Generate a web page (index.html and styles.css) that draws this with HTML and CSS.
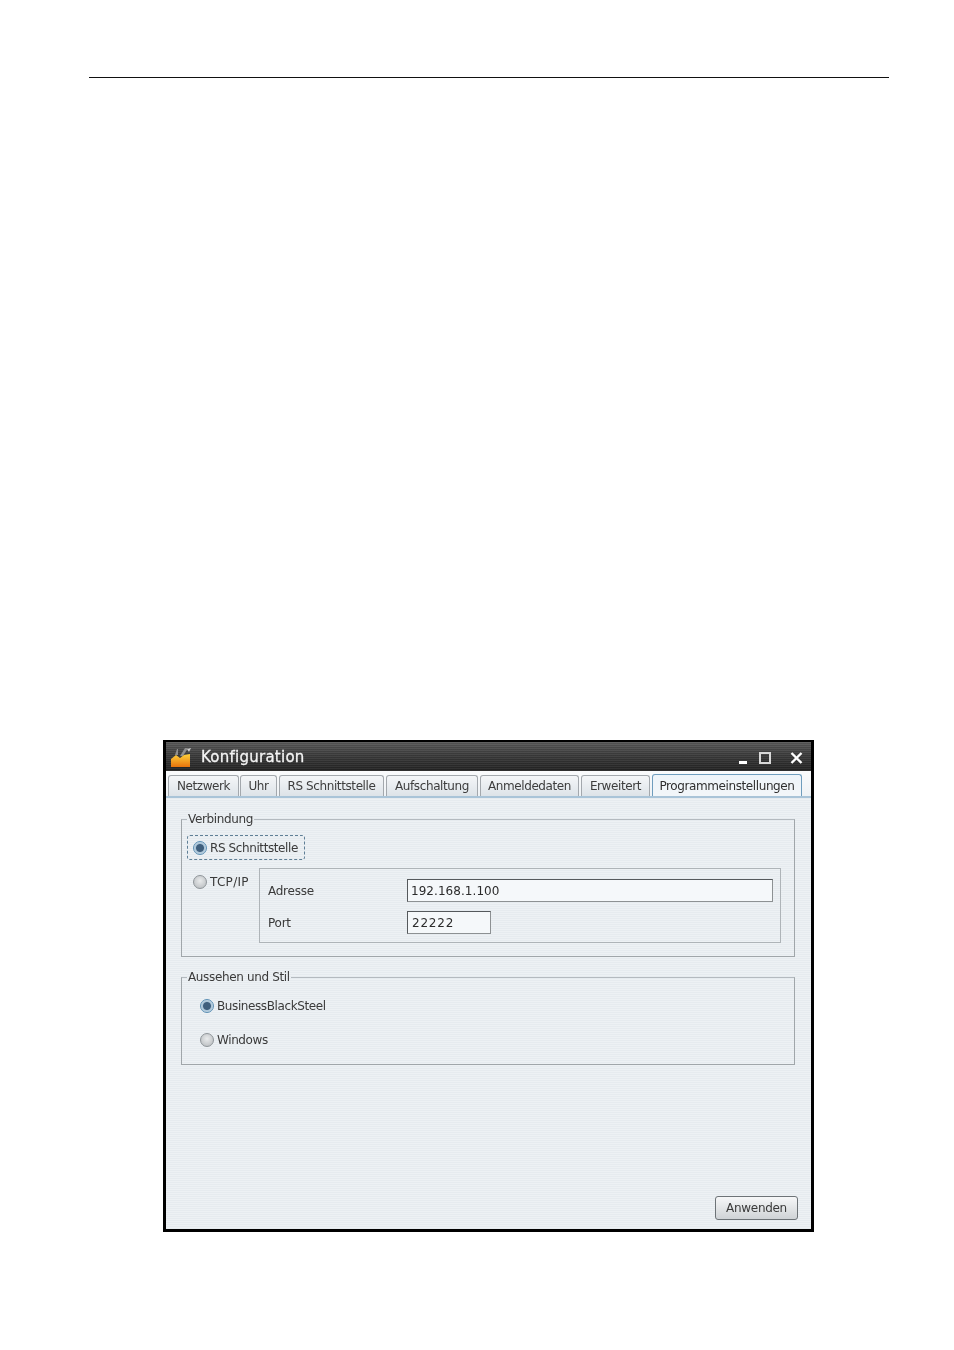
FILE: index.html
```html
<!DOCTYPE html>
<html lang="de">
<head>
  <meta charset="UTF-8" />
  <title>Konfiguration</title>
  <link rel="stylesheet" href="styles.css">
</head>
<body>
  <div class="page-rule"></div>

  <div class="window">
    <div class="titlebar">
      <svg class="app-icon" width="22" height="22" viewBox="0 0 22 22">
        <defs>
          <linearGradient id="flame" x1="0" y1="0" x2="0" y2="1">
            <stop offset="0" stop-color="#ffd23c"/>
            <stop offset="1" stop-color="#e8730c"/>
          </linearGradient>
        </defs>
        <path d="M5 9 L7 3 L8 3 L8 9 M10 10 L15 2 L18 2 L13 10" fill="#8f8f8f"/>
        <path d="M17 3 L21 2 L19 6 Z" fill="#cfcfcf"/>
        <path d="M1 13 L6 9 L10 12 L14 9 L20 8 L20 21 L1 21 Z" fill="url(#flame)"/>
      </svg>
      <span class="title">Konfiguration</span>
      <div class="win-buttons">
        <span class="btn-min"></span>
        <span class="btn-max"></span>
        <svg width="13" height="12" viewBox="0 0 13 12"><path d="M1.5 1 L11.5 11 M11.5 1 L1.5 11" stroke="#fff" stroke-width="2.4"/></svg>
      </div>
    </div>

    <div class="tabs">
      <div class="tab tab-1">Netzwerk</div>
      <div class="tab tab-2">Uhr</div>
      <div class="tab tab-3">RS Schnittstelle</div>
      <div class="tab tab-4">Aufschaltung</div>
      <div class="tab tab-5">Anmeldedaten</div>
      <div class="tab tab-6">Erweitert</div>
      <div class="tab tab-7 active">Programmeinstellungen</div>
    </div>

    <div class="content">
      <fieldset class="group group-conn">
        <legend>Verbindung</legend>
        <div class="focus-box">
          <span class="radio on"></span>
          <span>RS Schnittstelle</span>
        </div>
        <div class="tcp-row">
          <div class="tcp-label">
            <span class="radio"></span>
            <span>TCP/IP</span>
          </div>
          <div class="tcp-box">
            <div class="field">
              <label>Adresse</label>
              <div class="input input-wide">192.168.1.100</div>
            </div>
            <div class="field">
              <label>Port</label>
              <div class="input input-port">22222</div>
            </div>
          </div>
        </div>
      </fieldset>

      <fieldset class="group group-style">
        <legend>Aussehen und Stil</legend>
        <div class="option">
          <span class="radio on"></span>
          <span>BusinessBlackSteel</span>
        </div>
        <div class="option">
          <span class="radio"></span>
          <span>Windows</span>
        </div>
      </fieldset>

      <div class="actions">
        <button>Anwenden</button>
      </div>
    </div>
  </div>
</body>
</html>
```

FILE: styles.css
```css
* {
  box-sizing: border-box;
}
body {
  margin: 0;
  height: 1350px;
  background: #fff;
  padding-top: 77px;
  font-family: "DejaVu Sans", sans-serif;
  font-size: 12px;
  color: #3a3a3a;
  overflow: hidden;
}
.page-rule {
  width: 800px;
  margin-left: 89px;
  border-top: 1px solid #111;
}
.window {
  width: 651px;
  height: 492px;
  margin: 662px 0 0 163px;
  border: 3px solid #000;
  border-width: 2px 3px 3px 3px;
  display: flex;
  flex-direction: column;
  background: #e9eef2;
  filter: blur(0.35px);
}
.titlebar {
  height: 29px;
  flex: none;
  display: flex;
  align-items: center;
  padding: 0 8px 0 4px;
  background: repeating-linear-gradient(180deg, rgba(255,255,255,0.05) 0 1px, rgba(0,0,0,0.08) 1px 2px), linear-gradient(180deg, #5a5a5a 0%, #3c3c3c 45%, #232323 100%);
}
.app-icon {
  flex: none;
}
.title {
  margin-left: 9px;
  font-size: 15px;
  font-weight: 500;
  color: #f4f4f4;
  -webkit-text-stroke: 0.3px #f4f4f4;
  letter-spacing: 0.25px;
}
.win-buttons {
  margin-left: auto;
  margin-top: 2px;
  display: flex;
  align-items: center;
}
.btn-min {
  width: 8px;
  height: 3px;
  margin-top: 9px;
  background: #fff;
}
.btn-max {
  width: 12px;
  height: 12px;
  margin: 0 19px 0 12px;
  border: 2px solid #d8d8d8;
}
.tabs {
  flex: none;
  display: flex;
  align-items: flex-end;
  gap: 2px;
  height: 27px;
  padding-left: 2px;
  background: linear-gradient(180deg, #fafbfc, #eef2f5);
  border-bottom: 2px solid #a9c4d8;
}
.tab {
  height: 21px;
  line-height: 20px;
  text-align: center;
  color: #3d3d3d;
  font-size: 12px;
  letter-spacing: -0.4px;
  white-space: nowrap;
  background: linear-gradient(180deg, #f4f6f8, #dde3e8);
  border: 1px solid #a3a8ad;
  border-bottom: 0;
  border-radius: 3px 3px 0 0;
}
.tab-1 { width: 71px; }
.tab-2 { width: 37px; margin-left: -1px; }
.tab-3 { width: 105px; }
.tab-4 { width: 92px; }
.tab-5 { width: 99px; }
.tab-6 { width: 69px; }
.tab-7 { width: 150px; }
.tab.active {
  height: 22px;
  line-height: 22px;
  color: #2f2f2f;
  background: linear-gradient(180deg, #eef4f9, #f2f6f9);
  border-color: #6f9dbd;
}
.content {
  flex: 1;
  display: flex;
  flex-direction: column;
  padding: 14px 16px 9px 15px;
  background: repeating-linear-gradient(180deg, #e6ebef 0 1px, #edf1f4 1px 2px);
}
.group {
  margin: 0;
  padding: 0;
  min-width: 0;
  border: 1px solid #a0a6aa;
  border-top-color: #b4babf;
}
.group legend {
  margin-left: 5px;
  padding: 0 1px;
  line-height: 14px;
  font-size: 12px;
  letter-spacing: -0.35px;
}
.group-conn {
  height: 145px;
  padding-top: 9px;
}
.group-style {
  height: 95px;
  margin-top: 13px;
  padding-top: 15px;
}
.focus-box {
  display: flex;
  align-items: center;
  gap: 3px;
  width: 118px;
  height: 25px;
  margin-left: 5px;
  padding-left: 5px;
  letter-spacing: -0.4px;
  border: 1px dashed #5f7f96;
  border-radius: 3px;
}
.radio {
  flex: none;
  display: inline-block;
  width: 14px;
  height: 14px;
  border-radius: 50%;
  border: 1px solid #8f9599;
  background: radial-gradient(circle at 50% 40%, #e9ebec, #b4b8bb);
}
.radio.on {
  border-color: #5b8fb4;
  background: radial-gradient(circle, #3f5f7d 0 3.5px, #a9c4d8 4.5px, #d5e2eb 7px);
}
.tcp-row {
  display: flex;
  margin: 8px 13px 0 5px;
}
.tcp-label {
  display: flex;
  align-items: center;
  gap: 3px;
  width: 66px;
  height: 14px;
  margin: 7px 0 0 6px;
  letter-spacing: 0.3px;
}
.tcp-box {
  flex: 1;
  height: 75px;
  padding: 10px 7px 0 8px;
  border: 1px solid #aeb4b8;
}
.field {
  display: flex;
  align-items: center;
  height: 23px;
  margin-bottom: 9px;
}
.field label {
  width: 139px;
  letter-spacing: -0.25px;
}
.input {
  height: 23px;
  line-height: 22px;
  color: #2c2c2c;
  background: #f5f8fa;
  border: 1px solid #55595c;
  border-color: #55595c #8d9193 #8d9193 #55595c;
}
.input-wide {
  flex: 1;
  padding-left: 3px;
  letter-spacing: 0.05px;
}
.input-port {
  width: 84px;
  padding-left: 4px;
  letter-spacing: 0.8px;
}
.option {
  display: flex;
  align-items: center;
  gap: 3px;
  height: 14px;
  margin: 0 0 20px 18px;
  letter-spacing: -0.4px;
}
.actions {
  margin-top: auto;
  display: flex;
  justify-content: flex-end;
}
.actions button {
  width: 83px;
  height: 24px;
  margin-right: -3px;
  padding: 0;
  font: inherit;
  letter-spacing: -0.3px;
  color: #3a3a3a;
  background: linear-gradient(180deg, #f6f7f8, #cfd3d6);
  border: 1px solid #6d7377;
  border-radius: 3px;
}
```
